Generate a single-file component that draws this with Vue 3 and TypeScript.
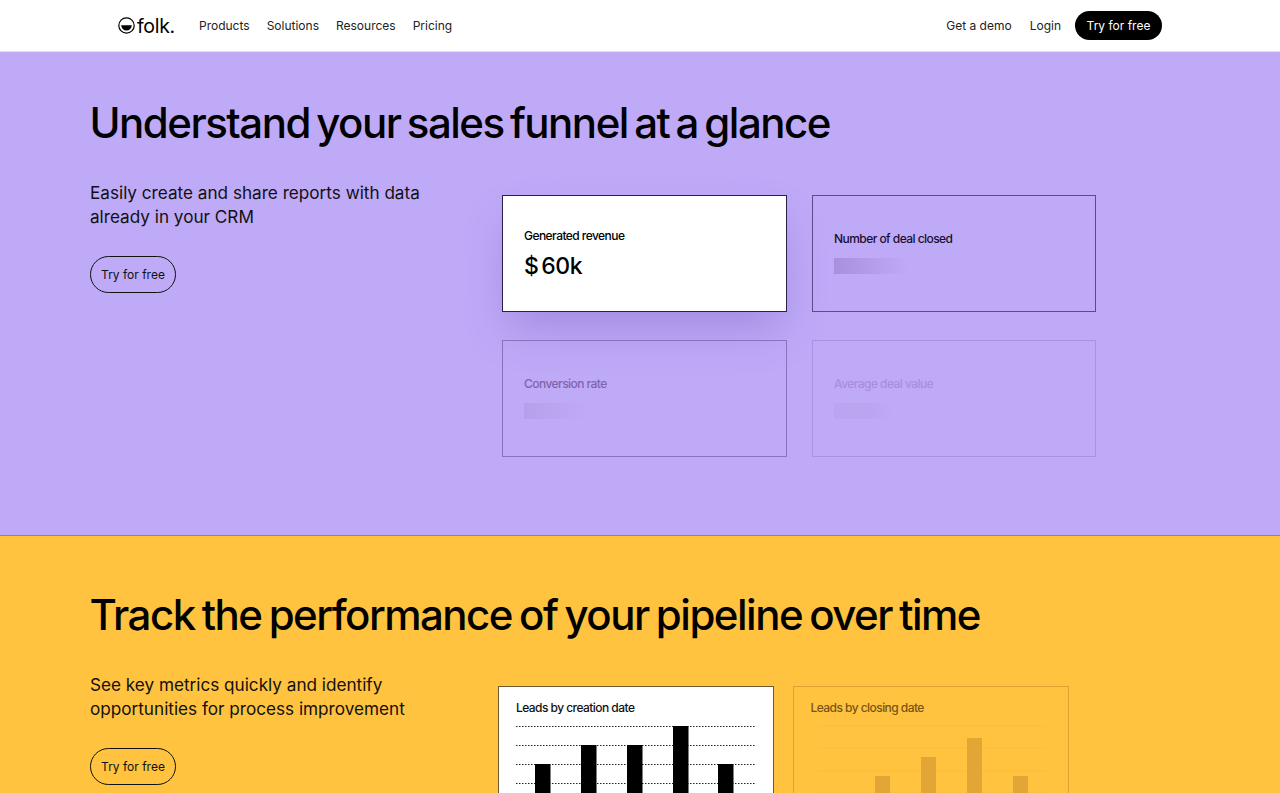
<script setup lang="ts">
interface Stat {
  label: string
  value?: string
  tone: string
}

interface Bar {
  x: number
  top: number
}

const navLinks = ['Products', 'Solutions', 'Resources', 'Pricing']

const stats: Stat[] = [
  { label: 'Generated revenue', value: '$ 60k', tone: 'active' },
  { label: 'Number of deal closed', tone: 'second' },
  { label: 'Conversion rate', tone: 'third' },
  { label: 'Average deal value', tone: 'fourth' },
]

// y is measured from the top of the chart svg
const creationLines = [1.5, 20.5, 39.5, 58.5, 77.5, 96.5]
const creationBars: Bar[] = [
  { x: 19, top: 38 },
  { x: 65, top: 19 },
  { x: 111, top: 19 },
  { x: 157, top: 0 },
  { x: 202, top: 38 },
]

const closingLines = [1, 23, 46, 68, 90]
const closingBars: Bar[] = [
  { x: 18, top: 72 },
  { x: 64, top: 51 },
  { x: 110, top: 32 },
  { x: 156, top: 13 },
  { x: 202, top: 51 },
]
</script>

<template>
  <div class="page">
    <header class="topbar">
      <div class="topbar-left">
        <a class="logo">
          <svg width="17" height="17" viewBox="0 0 17 17" aria-hidden="true">
            <circle cx="8.5" cy="8.5" r="7.7" fill="none" stroke="#000" stroke-width="1.2" />
            <path d="M3.2 8.2h10.6a5.3 5.3 0 0 1-10.6 0z" fill="#000" />
          </svg>
          <span>folk.</span>
        </a>
        <nav class="nav">
          <a v-for="link in navLinks" :key="link">{{ link }}</a>
        </nav>
      </div>
      <div class="topbar-right">
        <a>Get a demo</a>
        <a>Login</a>
        <button class="cta-dark">Try for free</button>
      </div>
    </header>

    <section class="block block-purple">
      <h2>Understand your sales funnel at a glance</h2>
      <div class="block-row">
        <div class="copy">
          <p>Easily create and share reports with data already in your CRM</p>
          <button class="cta-outline">Try for free</button>
        </div>
        <div class="stats">
          <div v-for="stat in stats" :key="stat.label" class="stat" :class="`stat-${stat.tone}`">
            <div class="stat-label">{{ stat.label }}</div>
            <div v-if="stat.value" class="stat-value">{{ stat.value }}</div>
            <div v-else class="stat-skeleton" />
          </div>
        </div>
      </div>
    </section>

    <section class="block block-yellow">
      <h2>Track the performance of your pipeline over time</h2>
      <div class="block-row">
        <div class="copy copy-yellow">
          <p>See key metrics quickly and identify opportunities for process improvement</p>
          <button class="cta-outline">Try for free</button>
        </div>
        <div class="charts">
          <div class="chart chart-active">
            <div class="chart-title">Leads by creation date</div>
            <svg class="chart-plot" width="239" height="130" viewBox="0 0 239 130" aria-hidden="true">
              <line
                v-for="y in creationLines"
                :key="y"
                x1="0"
                x2="239"
                :y1="y"
                :y2="y"
                stroke="#222"
                stroke-width="1"
                stroke-dasharray="1.5 1.5"
              />
              <rect v-for="bar in creationBars" :key="bar.x" :x="bar.x" :y="bar.top + 1" width="15.5" height="130" fill="#000" />
            </svg>
          </div>
          <div class="chart chart-muted">
            <div class="chart-title">Leads by closing date</div>
            <svg class="chart-plot chart-plot-soft" width="239" height="130" viewBox="0 0 239 130" aria-hidden="true">
              <line
                v-for="y in closingLines"
                :key="y"
                x1="8"
                x2="234"
                :y1="y"
                :y2="y"
                stroke="#f8bd3d"
                stroke-width="1"
              />
              <rect v-for="bar in closingBars" :key="bar.x" :x="bar.x" :y="bar.top" width="15" height="130" fill="#e1a636" />
            </svg>
          </div>
        </div>
      </div>
    </section>
  </div>
</template>

<style>
html,
body {
  margin: 0;
  background: #fff;
}
</style>

<style scoped>
.page {
  height: 793px;
  overflow: hidden;
  font-family: Inter, "Liberation Sans", sans-serif;
  color: #000;
}

.topbar {
  height: 51px;
  padding: 0 118px;
  display: flex;
  align-items: center;
  justify-content: space-between;
  background: #fff;
  border-bottom: 1px solid #e4dcfb;
  font-size: 12px;
  color: #222;
}

.topbar-left,
.topbar-right {
  display: flex;
  align-items: center;
}

.logo {
  width: 81px;
  display: flex;
  align-items: center;
  gap: 2px;
  font-size: 19.5px;
  font-weight: 400;
  letter-spacing: -0.3px;
  color: #000;
}

.nav {
  display: flex;
  gap: 17px;
}

.topbar-right {
  gap: 18px;
}

.cta-dark {
  margin-left: -4px;
  height: 29px;
  width: 87px;
  padding: 0;
  border: none;
  border-radius: 15px;
  background: #000;
  color: #fff;
  font: inherit;
}

.block {
  box-sizing: border-box;
  padding-left: 90px;
}

.block h2 {
  margin: 0 0 0 -0.5px;
  font-size: 42px;
  line-height: 60px;
  font-weight: 500;
  letter-spacing: -1.5px;
}

.block-purple {
  height: 484px;
  padding-top: 41px;
  background: #bfaaf8;
  border-bottom: 1px solid #a5835f;
}

.block-purple h2 {
  word-spacing: -3.4px;
}

.block-yellow {
  height: 257px;
  padding-top: 49px;
  background: #ffc33f;
}

.block-yellow h2 {
  word-spacing: -2.6px;
}

.block-row {
  display: flex;
}

.copy {
  width: 412px;
  padding-top: 28px;
  flex-shrink: 0;
}

.copy-yellow {
  width: 408px;
}

.copy p {
  margin: 0 0 27px;
  width: 345px;
  font-size: 17.15px;
  line-height: 24px;
  color: #111;
}

.cta-outline {
  display: block;
  width: 86px;
  height: 37px;
  padding: 0;
  background: transparent;
  border: 1px solid #111;
  border-radius: 19px;
  color: #111;
  font-family: inherit;
  font-size: 12px;
}

.stats {
  margin-top: 42px;
  display: grid;
  grid-template-columns: 285px 284px;
  grid-template-rows: 117px 117px;
  column-gap: 25px;
  row-gap: 28px;
}

.stat {
  box-sizing: border-box;
  padding: 35px 21px 0;
  border: 1px solid #2a2048;
  font-size: 12px;
  font-weight: 500;
  letter-spacing: -0.55px;
}

.stat-active {
  padding-top: 32px;
  background: #fff;
  box-shadow: 0 22px 44px -6px rgba(88, 62, 160, 0.28);
}

.stat-second {
  border-color: #5d4a88;
  color: #170f30;
}

.stat-third {
  border-color: #8a73bb;
  color: #7d64ad;
}

.stat-fourth {
  border-color: #a992de;
  color: #a78fdc;
}

.stat-label {
  line-height: 16px;
}

.stat-value {
  margin-top: 8px;
  font-size: 23px;
  line-height: 28px;
  font-weight: 500;
  letter-spacing: -0.4px;
  word-spacing: -3px;
  color: #000;
}

.stat-skeleton {
  margin-top: 11px;
  width: 74px;
  height: 16px;
  background: linear-gradient(90deg, #a98fdd, #bfaaf8);
}

.stat-third .stat-skeleton {
  width: 64px;
  background: linear-gradient(90deg, #b5a0ea, #bfaaf8);
}

.stat-fourth .stat-skeleton {
  width: 60px;
  background: linear-gradient(90deg, #baa5f1 60%, #bfaaf8);
}

.charts {
  margin-top: 41px;
  display: flex;
  gap: 18.5px;
}

.chart {
  box-sizing: border-box;
  width: 276px;
  height: 200px;
  padding: 13px 17px 0;
  font-size: 12px;
  font-weight: 500;
  letter-spacing: -0.55px;
}

.chart-active {
  border: 1px solid #6b5a34;
  background: #fff;
  color: #111;
}

.chart-muted {
  border: 1px solid #dfa233;
  color: #7a5414;
}

.chart-title {
  line-height: 16px;
}

.chart-plot {
  display: block;
  margin-top: 9px;
}

.chart-plot-soft {
  filter: blur(0.5px);
}
</style>
